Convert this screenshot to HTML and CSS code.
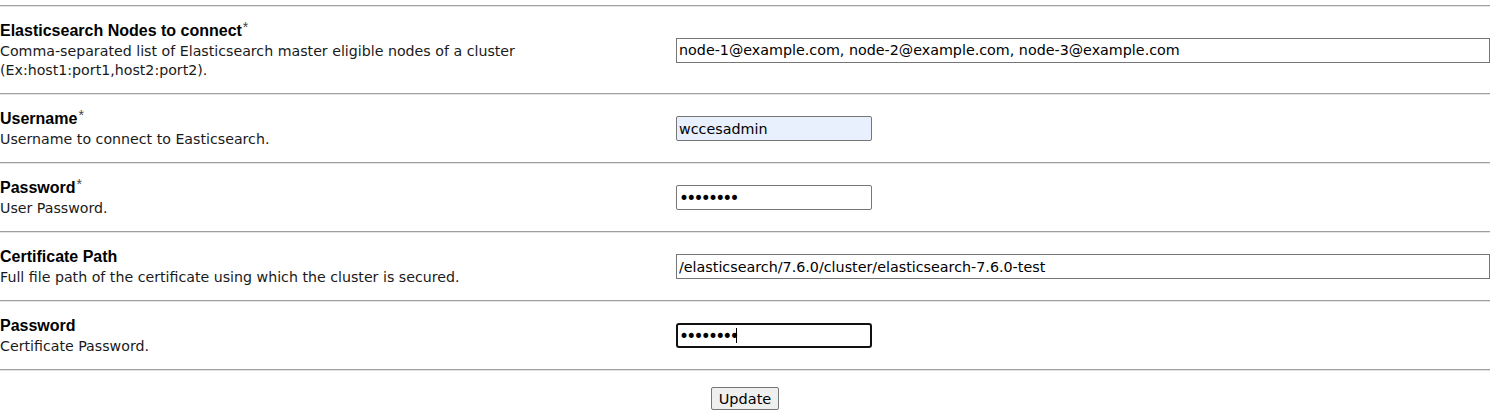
FILE: index.html
```html
<!DOCTYPE html>
<html>
<head>
<meta charset="utf-8">
<link rel="stylesheet" href="styles.css">
</head>
<body>
<form class="form">
  <div class="sep"></div>
  <div class="row">
    <div class="info">
      <div class="label">Elasticsearch Nodes to connect<span class="req">*</span></div>
      <div class="desc">Comma-separated list of Elasticsearch master eligible nodes of a cluster<br>(Ex:host1:port1,host2:port2).</div>
    </div>
    <div class="field"><input class="text wide" type="text" value="node-1@example.com, node-2@example.com, node-3@example.com"></div>
  </div>
  <div class="sep"></div>
  <div class="row">
    <div class="info">
      <div class="label">Username<span class="req">*</span></div>
      <div class="desc">Username to connect to Easticsearch.</div>
    </div>
    <div class="field"><input class="text short autofill" type="text" value="wccesadmin"></div>
  </div>
  <div class="sep"></div>
  <div class="row">
    <div class="info">
      <div class="label">Password<span class="req">*</span></div>
      <div class="desc">User Password.</div>
    </div>
    <div class="field"><input class="text short secret" type="password" value="password"></div>
  </div>
  <div class="sep"></div>
  <div class="row">
    <div class="info">
      <div class="label">Certificate Path</div>
      <div class="desc">Full file path of the certificate using which the cluster is secured.</div>
    </div>
    <div class="field"><input class="text wide" type="text" value="/elasticsearch/7.6.0/cluster/elasticsearch-7.6.0-test"></div>
  </div>
  <div class="sep"></div>
  <div class="row">
    <div class="info">
      <div class="label">Password</div>
      <div class="desc">Certificate Password.</div>
    </div>
    <div class="field"><span class="focuswrap"><input class="text short secret focused" type="password" value="password"><span class="caret"></span></span></div>
  </div>
  <div class="sep"></div>
  <div class="actions"><button type="button" class="btn">Update</button></div>
</form>
</body>
</html>
```

FILE: styles.css
```css
html, body {
  margin: 0;
  padding: 0;
  background: #ffffff;
}
.form {
  width: 1490px;
  padding-top: 5px;
}
.sep {
  height: 0;
  border-top: 1px solid #9f9f9f;
  border-bottom: 1px solid #e4e4e4;
}
.row {
  display: grid;
  grid-template-columns: 675px 1fr;
  padding: 13px 0 13px;
}
.info {
  display: flex;
  flex-direction: column;
}
.label {
  font-family: "Liberation Sans", Arial, sans-serif;
  font-weight: bold;
  font-size: 16px;
  line-height: 22px;
  color: #000;
}
.req {
  font-family: "Liberation Sans", Arial, sans-serif;
  font-weight: normal;
  font-size: 14px;
  color: #444;
  vertical-align: top;
  line-height: 14px;
  margin-left: 1px;
}
.desc {
  font-family: "DejaVu Sans", Verdana, sans-serif;
  font-size: 14.2px;
  line-height: 19px;
  color: #1a1a1a;
}
.field {
  display: flex;
  align-items: center;
}
.text {
  box-sizing: border-box;
  height: 25px;
  margin: 0 0 0 1px;
  padding: 0 2px;
  border: 1px solid #767676;
  border-radius: 0;
  font-family: "DejaVu Sans", Verdana, sans-serif;
  font-size: 14.3px;
  color: #000;
  background: #fff;
  outline: none;
}
.wide {
  width: 814px;
}
.short {
  width: 196px;
  border-radius: 2px;
}
.secret {
  font-size: 17px;
  letter-spacing: -2.8px;
  padding-left: 2px;
}
.autofill {
  background: #e8f0fe;
}
.focuswrap {
  position: relative;
  display: inline-block;
}
.focused {
  border: 2px solid #111;
  border-radius: 3px;
  padding-left: 1px;
  display: block;
}
.caret {
  position: absolute;
  left: 61px;
  top: 5px;
  width: 1px;
  height: 15px;
  background: #000;
}
.actions {
  display: flex;
  justify-content: center;
  padding-top: 16px;
}
.btn {
  font-family: "DejaVu Sans", Verdana, sans-serif;
  font-size: 14.5px;
  height: 23px;
  padding: 0 7px;
  color: #000;
  background: #efefef;
  border: 1px solid #767676;
  border-radius: 2px;
}
```
